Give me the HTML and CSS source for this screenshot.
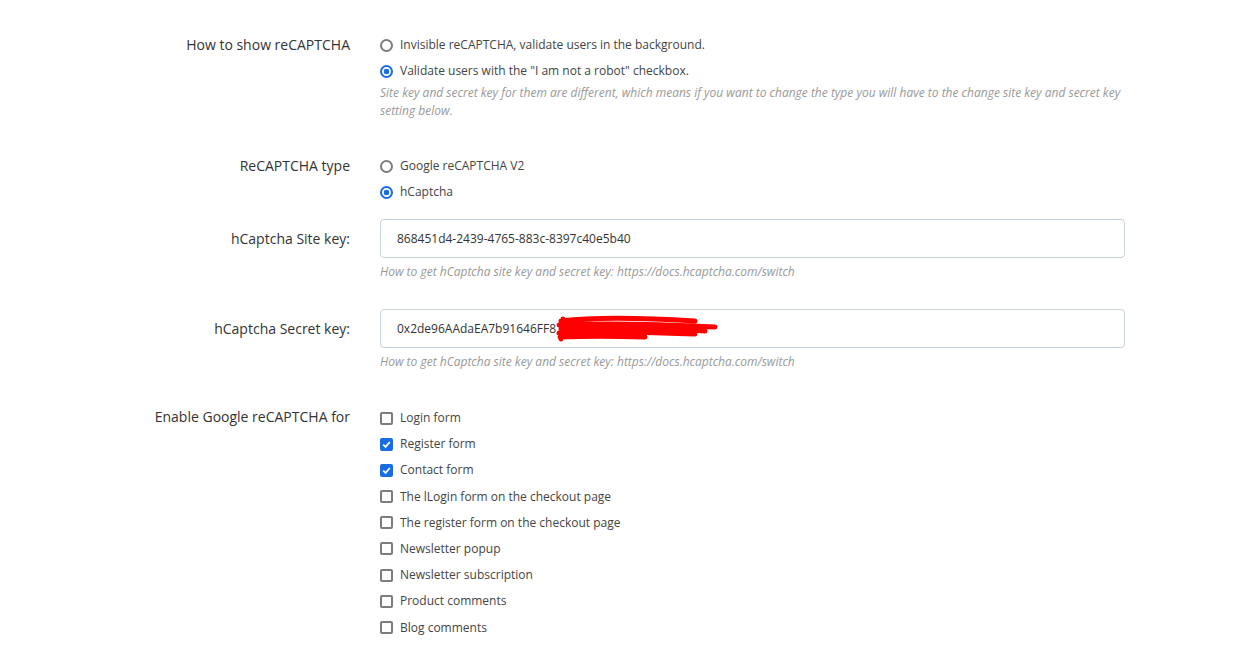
FILE: index.html
```html
<!DOCTYPE html>
<html lang="en">
<head>
    <meta charset="UTF-8">
    <title>Captcha settings</title>
    <link rel="stylesheet" href="styles.css">
</head>
<body>
    <div class="settings">
        <div class="form-group group-show">
            <label class="field-label">How to show reCAPTCHA</label>
            <div class="field">
                <label class="option"><span class="radio"></span> Invisible reCAPTCHA, validate users in the background.</label>
                <label class="option"><span class="radio checked"></span> Validate users with the "I am not a robot" checkbox.</label>
                <p class="help">Site key and secret key for them are different, which means if you want to change the type you will have to the change site key and secret key setting below.</p>
            </div>
        </div>
        <div class="form-group group-type">
            <label class="field-label">ReCAPTCHA type</label>
            <div class="field">
                <label class="option"><span class="radio"></span> Google reCAPTCHA V2</label>
                <label class="option"><span class="radio checked"></span> hCaptcha</label>
            </div>
        </div>
        <div class="form-group group-input">
            <label class="field-label">hCaptcha Site key:</label>
            <div class="field">
                <input class="text-input" type="text" value="868451d4-2439-4765-883c-8397c40e5b40">
                <p class="help">How to get hCaptcha site key and secret key: https://docs.hcaptcha.com/switch</p>
            </div>
        </div>
        <div class="form-group group-input group-secret">
            <label class="field-label">hCaptcha Secret key:</label>
            <div class="field">
                <div class="input-wrap">
                    <input class="text-input" type="text" value="0x2de96AAdaEA7b91646FF8">
                    <svg class="scribble" width="170" height="28" viewBox="0 0 170 28">
                        <path d="M6 6 C40 2 90 3 140 6 M4 10 C50 8 100 9 160 12 M6 14 C50 11 110 13 150 16 M4 18 C40 16 90 17 140 19 M5 22 C30 21 60 21 90 22 M8 4 L6 24" stroke="#f00" stroke-width="5" fill="none" stroke-linecap="round"/>
                    </svg>
                </div>
                <p class="help">How to get hCaptcha site key and secret key: https://docs.hcaptcha.com/switch</p>
            </div>
        </div>
        <div class="form-group group-enable">
            <label class="field-label">Enable Google reCAPTCHA for</label>
            <div class="field">
                <label class="option"><span class="check"></span> Login form</label>
                <label class="option"><span class="check checked"><svg width="9" height="9" viewBox="0 0 9 9"><path d="M1.2 4.6 L3.6 6.9 L7.8 2" stroke="#fff" stroke-width="1.7" fill="none"/></svg></span> Register form</label>
                <label class="option"><span class="check checked"><svg width="9" height="9" viewBox="0 0 9 9"><path d="M1.2 4.6 L3.6 6.9 L7.8 2" stroke="#fff" stroke-width="1.7" fill="none"/></svg></span> Contact form</label>
                <label class="option"><span class="check"></span> The lLogin form on the checkout page</label>
                <label class="option"><span class="check"></span> The register form on the checkout page</label>
                <label class="option"><span class="check"></span> Newsletter popup</label>
                <label class="option"><span class="check"></span> Newsletter subscription</label>
                <label class="option"><span class="check"></span> Product comments</label>
                <label class="option"><span class="check"></span> Blog comments</label>
            </div>
        </div>
    </div>
</body>
</html>
```

FILE: styles.css
```css
body {
    margin: 0;
    padding: 0;
    background: #fff;
    font-family: "Open Sans", "Liberation Sans", sans-serif;
    color: #333;
}
.settings {
    padding-top: 36px;
}
.form-group {
    display: grid;
    grid-template-columns: 350px 745px;
    column-gap: 30px;
}
.field-label {
    text-align: right;
    font-size: 14px;
    line-height: 18px;
    color: #333;
}
.field {
    display: flex;
    flex-direction: column;
}
.option {
    display: flex;
    align-items: center;
    gap: 7px;
    font-size: 12px;
    line-height: 18px;
    color: #444;
    margin-bottom: 8px;
}
.radio, .check {
    box-sizing: border-box;
    flex: none;
    width: 13px;
    height: 13px;
    border: 2px solid #7d7b82;
    background: #fff;
}
.radio {
    border-radius: 50%;
}
.radio.checked {
    border-color: #1a6de0;
    background: radial-gradient(circle, #1a6de0 0 2.6px, #fff 3.1px);
}
.check {
    border-radius: 2px;
    display: flex;
    align-items: center;
    justify-content: center;
}
.check.checked {
    border-color: #1a6de0;
    background: #1a6de0;
}
.help {
    margin: 0;
    font-size: 12px;
    line-height: 18px;
    font-style: italic;
    color: #999;
}
.group-show .help {
    margin-top: -4px;
}
.group-show {
    margin-bottom: 37px;
}
.group-type {
    margin-bottom: 10px;
}
.group-input .field-label {
    line-height: 39px;
}
.text-input {
    box-sizing: border-box;
    width: 100%;
    height: 39px;
    margin: 0;
    padding: 0 16px;
    border: 1px solid #c9d3dc;
    border-radius: 4px;
    font-family: inherit;
    font-size: 12px;
    color: #333;
    outline: none;
}
.group-input .help {
    margin-top: 5px;
}
.group-input {
    margin-bottom: 28px;
}
.group-secret {
    margin-bottom: 37px;
}
.input-wrap {
    position: relative;
}
.scribble {
    position: absolute;
    left: 175px;
    top: 6px;
}
.group-enable .field {
    padding-top: 1px;
}
.group-enable .option {
    margin-bottom: 8.2px;
}
```
